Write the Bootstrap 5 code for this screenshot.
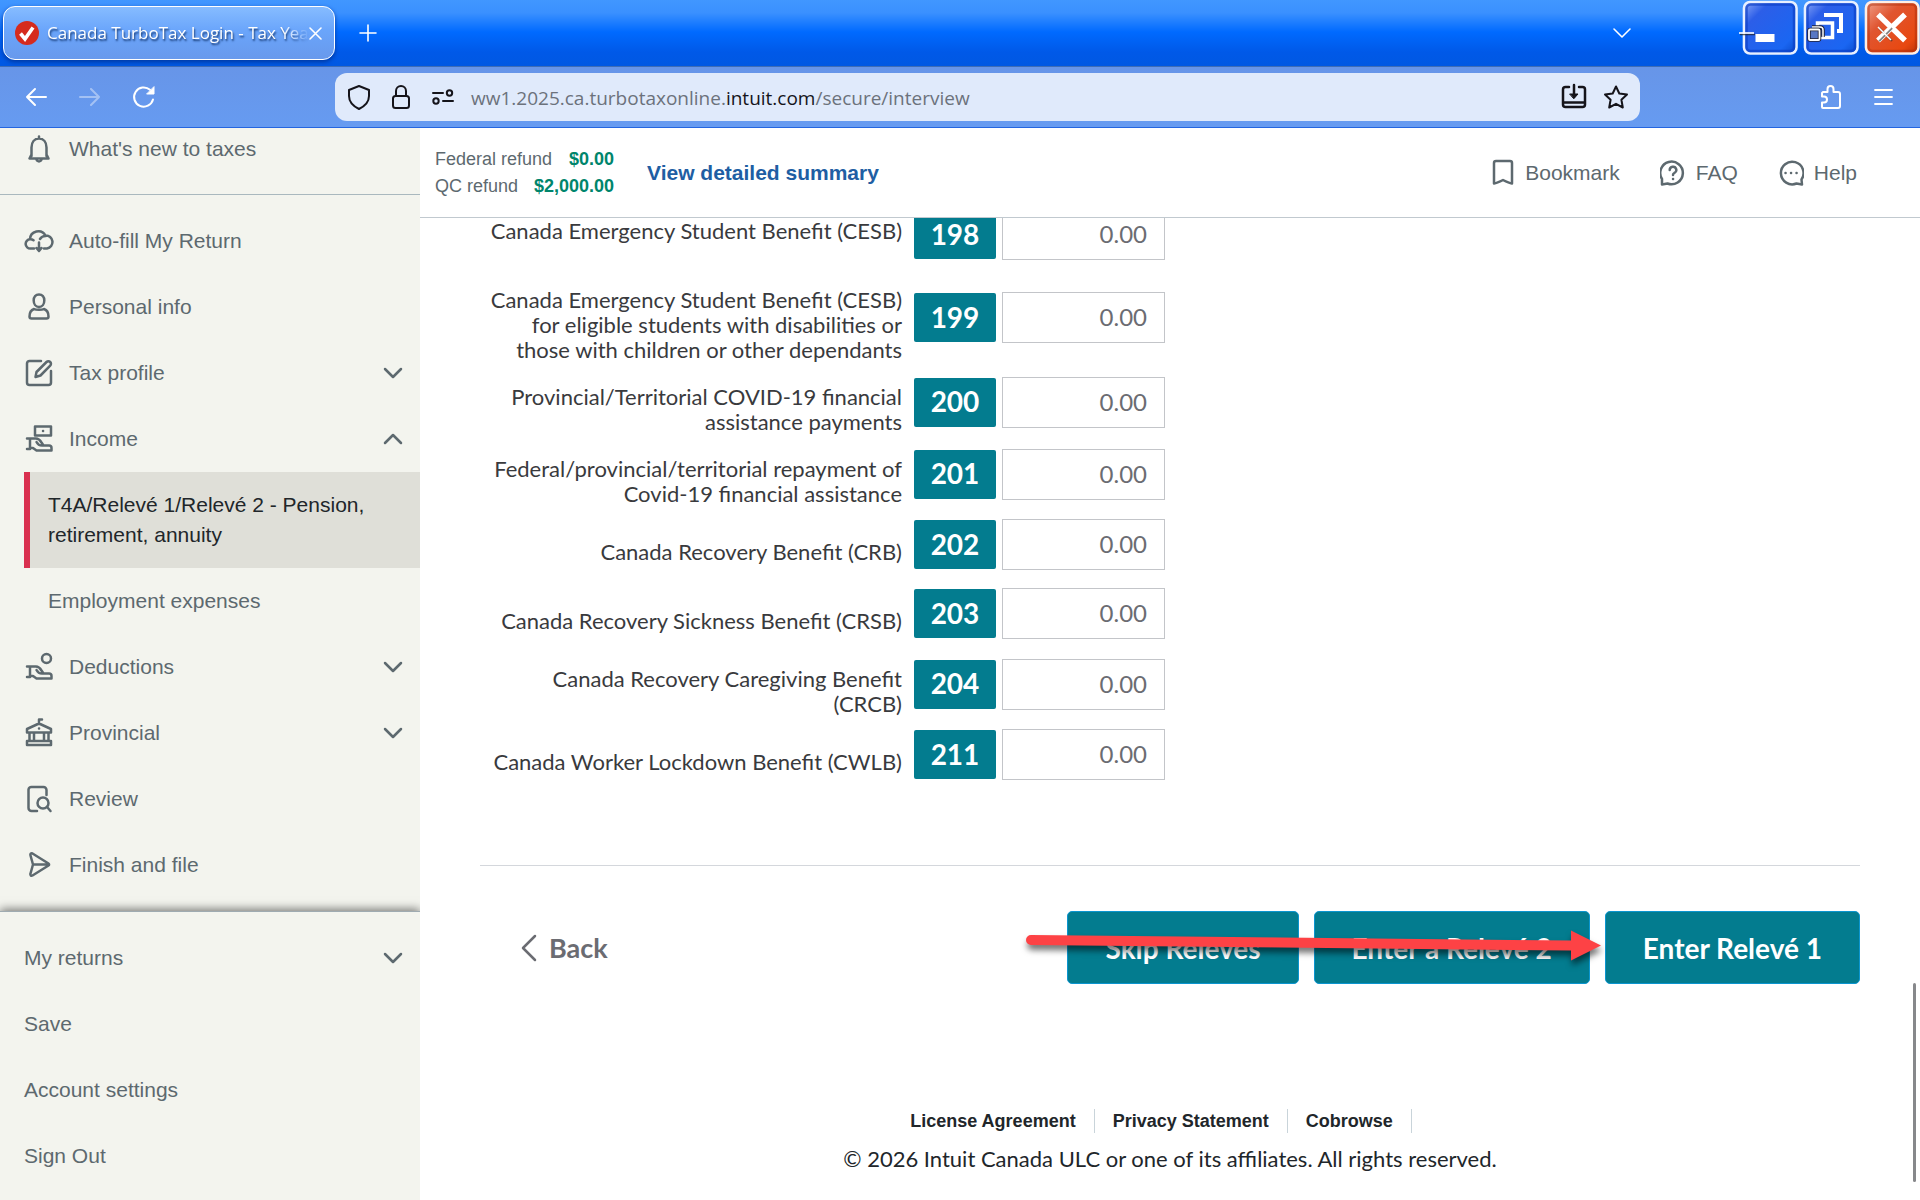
<!DOCTYPE html>
<html lang="en">
<head>
<meta charset="utf-8">
<meta name="viewport" content="width=device-width, initial-scale=1">
<title>Canada TurboTax Login - Tax Year 2025</title>
<link href="https://cdn.jsdelivr.net/npm/bootstrap@5.3.0/dist/css/bootstrap.min.css" rel="stylesheet">
<script src="https://cdn.jsdelivr.net/npm/bootstrap@5.3.0/dist/js/bootstrap.bundle.min.js"></script>
<style>
  :root { --teal: #037c8f; --slate: #5d696f; --sand: #f3f4ee; }
  body { font-family: "Liberation Sans", Arial, sans-serif; font-size: 21px; line-height: 30px; color: #393a3d; background: #fff; }
  button { font-family: inherit; }
  svg { display: block; flex: none; }
  .bare { background: none; border: 0; padding: 0; color: inherit; }
  .ico { fill: none; stroke: currentColor; stroke-width: 2.5; stroke-linecap: round; stroke-linejoin: round; }
  .ico-thin { stroke-width: 1.6; }

  /* browser frame */
  .titlebar { height: 67px; background: linear-gradient(#4197ff 0, #3a90ff 13px, #006aff 32px, #0059e8 52px, #0058e2 66px); border-bottom: 1px solid #3f6db5; color: #fff; font-family: "Open Sans", sans-serif; }
  .tab-pill { width: 332px; height: 54px; margin-left: 3px; margin-top: 6px; padding: 0 17px 0 11px; border: 1px solid #fff; border-radius: 12px; background: linear-gradient(#86bcff, #6aa5fb 45%, #6899ec); box-shadow: 0 2px 4px #0038a0; }
  .tab-title { font-size: 17px; text-shadow: 1px 2px 2px #12356e; white-space: nowrap; -webkit-mask-image: linear-gradient(90deg, #000 90%, transparent); mask-image: linear-gradient(90deg, #000 90%, transparent); }
  .tab-list { margin-right: 105px; }
  .toolbar-row { height: 61px; background: linear-gradient(#6795e8, #669bf1); border-bottom: 1px solid #2465e0; color: #fff; padding: 0 24px; font-family: "Open Sans", sans-serif; }
  .nav-set { width: 311px; gap: 26px; }
  .address { width: 1305px; height: 48px; border-radius: 12px; background: #e0eafb; color: #15141a; padding: 0 10px; gap: 14px; }
  .url-text { font-size: 19px; color: #6c727c; white-space: nowrap; padding-top: 2px; }
  .url-text b { font-weight: 400; color: #15141a; }
  .menu-set { gap: 27px; }

  /* sidebar */
  .sidebar { width: 420px; flex: none; background: var(--sand); color: var(--slate); }
  .side-row { height: 66px; padding: 0 17px 0 24px; gap: 15px; color: var(--slate); text-decoration: none; text-align: left; width: 100%; }
  .side-first { margin-top: -12px; }
  .side-rule { border-top: 1px solid #a9b8be; margin: 12px 0 13px; }
  .side-sub { display: flex; align-items: center; min-height: 66px; margin-left: 24px; padding-left: 24px; color: var(--slate); text-decoration: none; }
  .side-sub.current { min-height: 96px; padding: 18px 24px 18px 18px; border-left: 6px solid #d9304f; background: #dfdfd8; color: #21262a; }
  .side-foot { border-top: 1px solid #9fabb1; padding: 13px 0 11px; box-shadow: 0 -2px 9px rgba(0,0,0,.5); clip-path: inset(-16px 0 0 0); background: var(--sand); }

  /* summary bar */
  .summary { height: 90px; border-bottom: 1px solid #c1c9cf; padding: 1px 63px 0 15px; background: #fff; z-index: 1; position: relative; color: var(--slate); }
  .refunds { font-size: 18px; line-height: 27px; width: 179px; }
  .refunds b { color: #00856c; margin-left: 12px; }
  .summary-link { font-weight: 700; color: #205ea3; text-decoration: none; margin-left: 33px; }
  .tools { gap: 40px; }
  .tools a { color: var(--slate); text-decoration: none; gap: 10px; }

  /* slip form */
  .lato { font-family: Lato, sans-serif; }
  .slip { margin-top: -18px; padding-left: 60px; }
  .slip-row { min-height: 69px; padding: 3px 0; }
  .slip-label { width: 422px; padding: 15px 0 1px; font-size: 22px; line-height: 25px; text-align: right; white-space: nowrap; }
  .slip-label.raised { padding: 0 0 9px; }
  .box-code { width: 82px; height: 49px; margin: 0 6px 0 12px; padding-bottom: 2px; background: var(--teal); color: #fff; font-size: 28px; font-weight: 700; border-radius: 2px; }
  .box-amount { width: 163px; height: 51px; padding: 0 17px 2px; border: 1px solid #c3c5c9; border-radius: 0; font-size: 24px; text-align: right; color: #6b6c72; }
  .box-amount::placeholder { color: #6b6c72; opacity: 1; }
  .actions { margin: 76px 60px 0; padding-top: 45px; border-top: 1px solid #d4d7dc; }
  .action-set { gap: 15px; }
  .back-link { color: #6b6c72; font-size: 27px; font-weight: 700; margin-left: 41px; gap: 12px; }
  .btn-teal { --bs-btn-color: #fff; --bs-btn-bg: var(--teal); --bs-btn-border-color: #0b95cf; --bs-btn-hover-bg: #026b7c; --bs-btn-hover-color: #fff; --bs-btn-border-radius: 5px; --bs-btn-font-size: 28px; --bs-btn-font-weight: 700; height: 73px; padding: 0 37px; }
  .callout { position: absolute; right: 258px; top: 11px; filter: drop-shadow(1px 5px 3px rgba(0,0,0,.55)); pointer-events: none; }
  .legal { margin-top: 125px; font-size: 18px; line-height: 24px; font-weight: 700; }
  .legal a { color: #21262a; text-decoration: none; padding-right: 18px; margin-right: 18px; border-right: 1px solid #c9d4da; }
  .copyright { font-size: 22px; margin-top: 11px; color: #21262a; }
  .thumb { position: absolute; right: 4px; top: 855px; width: 3px; height: 199px; border-radius: 2px; background: #87888b; }
</style>
</head>
<body class="d-flex flex-column vh-100 overflow-hidden">

<svg width="0" height="0" class="position-absolute" aria-hidden="true">
  <symbol id="chev" viewBox="0 0 20 12"><path d="M2 2l8 8 8-8"/></symbol>
  <symbol id="bell" viewBox="0 0 30 30"><path d="M15 2.500v2M7.500 22V13.500C7.500 8 10.500 4.500 15 4.500S22.500 8 22.500 13.500V22M7.500 20.500L5.500 24.500H24.500L22.500 20.500M12.500 25.500a2.600 2.600 0 0 0 5 0"/></symbol>
  <symbol id="cloud" viewBox="0 0 30 30"><path d="M10 22.500H6.500A4.600 4.600 0 0 1 6 13.300 8.300 8.300 0 0 1 21.500 9.500 6.500 6.500 0 0 1 23 22.400H20M6 13.300a5 5 0 0 1 3.500 1M16 13a6.500 6.500 0 0 1 6-3M15 16.500v8M12.500 22l2.500 3 2.500-3"/></symbol>
  <symbol id="person" viewBox="0 0 30 30"><path d="M15 2.500c3.300 0 5.300 2.500 5.300 6s-2 6.500-5.300 6.500-5.300-3-5.300-6.500 2-6 5.300-6zM5.500 24.500c0-4 1.700-6.500 4.500-7.500 2 1 8 1 10 0 2.800 1 4.500 3.500 4.500 7.500 0 1.500-.5 2-2 2H7.500c-1.500 0-2-.5-2-2z"/></symbol>
  <symbol id="edit" viewBox="0 0 30 30"><path d="M17 3H5.500A2.500 2.500 0 0 0 3 5.500v19A2.500 2.500 0 0 0 5.500 27h19a2.500 2.500 0 0 0 2.500-2.500V13M11.500 19l1-5L22.500 4a2.600 2.600 0 0 1 3.700 3.700L16.500 17.500z"/></symbol>
  <symbol id="hand" viewBox="0 0 30 30"><path d="M3 14.500h3M3 25h3M6 14.500V25M6 14.500h6c2.500 0 4 1.500 5.500 4l2 3h5.500c1.500 0 2.500 1 2.500 2.500v2.500H12.500L9 24H6M12.500 18c1 2 3 3.500 5.500 3.500h2"/></symbol>
  <symbol id="hall" viewBox="0 0 30 30"><path d="M15 6V1.500h3M15 5.500L27 11v3.500H3V11zM5.500 14.500V23M10 14.500V23M20 14.500V23M24.500 14.500V23M3 23h24v4H3zM15 10.500h.1"/></symbol>
  <symbol id="review" viewBox="0 0 30 30"><path d="M13 27H7.500A3 3 0 0 1 4.500 24V5.500A3 3 0 0 1 7.500 3h12a3 3 0 0 1 3 3v5M23.500 23.500L26.500 27"/><circle cx="19" cy="19" r="5.500"/></symbol>
  <symbol id="send" viewBox="0 0 30 30"><path d="M6.500 5.500c-.5-1.500.5-2.500 2-2L24.500 13.500c.8.500.8 1.500 0 2L8.500 25.500c-1.500.8-2.500-.5-2-2L9 14.500zM9 14.500h15"/></symbol>
</svg>

<!-- Title bar -->
<header class="titlebar d-flex flex-shrink-0">
  <div class="tab-pill d-flex align-items-center">
    <svg width="24" height="24" viewBox="0 0 24 24" class="me-2"><circle cx="12" cy="12" r="12" fill="#d52b1e"/><path d="M5.500 12.500L10 18 18 6.500" fill="none" stroke="#fff" stroke-width="3.600"/></svg>
    <span class="tab-title">Canada TurboTax Login - Tax Yea</span>
    <button class="bare ms-auto" aria-label="Close tab"><svg width="13" height="13" viewBox="0 0 13 13" class="ico ico-thin"><path d="M1 1l11 11M12 1L1 12"/></svg></button>
  </div>
  <button class="bare ms-4" aria-label="New tab"><svg width="18" height="18" viewBox="0 0 18 18" class="ico ico-thin"><path d="M9 1v16M1 9h16"/></svg></button>
  <button class="bare ms-auto tab-list" aria-label="List all tabs"><svg width="20" height="12" class="ico ico-thin"><use href="#chev"/></svg></button>
  <div class="d-flex">
    <svg width="0" height="0"><defs>
      <linearGradient id="gb" x1="0" y1="0" x2="1" y2="1"><stop offset="0" stop-color="#8aa6f6"/><stop offset=".25" stop-color="#2c5ee8"/><stop offset=".8" stop-color="#1a66f2"/><stop offset="1" stop-color="#0a49c8"/></linearGradient>
      <linearGradient id="gr" x1="0" y1="0" x2="1" y2="1"><stop offset="0" stop-color="#f0a08a"/><stop offset=".35" stop-color="#e05530"/><stop offset=".8" stop-color="#e84810"/><stop offset="1" stop-color="#b83008"/></linearGradient>
    </defs></svg>
    <button class="bare align-self-start" aria-label="Minimize"><svg width="61" height="56" viewBox="0 0 61 56"><rect x="7" y="2" width="52.500" height="51.500" rx="6" fill="url(#gb)" stroke="#e8f0ff" stroke-width="2.600"/><rect x="9.500" y="4.500" width="47.500" height="46.500" rx="4" fill="none" stroke="#0c3fc4" stroke-width="2.500" opacity=".65"/><path d="M18.500 34h19v8h-19z" fill="#fff"/><path d="M3 34.500h15" stroke="#222" stroke-width="1.500" opacity=".7"/><path d="M2 33h15" stroke="#fff" stroke-width="1.600"/></svg></button>
    <button class="bare align-self-start" aria-label="Restore"><svg width="61" height="56" viewBox="0 0 61 56"><rect x="7" y="2" width="52.500" height="51.500" rx="6" fill="url(#gb)" stroke="#e8f0ff" stroke-width="2.600"/><rect x="9.500" y="4.500" width="47.500" height="46.500" rx="4" fill="none" stroke="#0c3fc4" stroke-width="2.500" opacity=".65"/><path d="M26 15h17v16h-4" fill="none" stroke="#fff" stroke-width="4"/><path d="M19.500 23h15v14.500h-15z" fill="none" stroke="#fff" stroke-width="3.500"/><path d="M14 27h8c2 0 3 1 3 3v7" fill="none" stroke="#223" stroke-width="3.500"/><path d="M14 27h8c2 0 3 1 3 3v7" fill="none" stroke="#fff" stroke-width="1.500"/><rect x="11" y="29.500" width="10.500" height="10.500" rx="1" fill="#5877c4" stroke="#223" stroke-width="3.500"/><rect x="11" y="29.500" width="10.500" height="10.500" rx="1" fill="none" stroke="#fff" stroke-width="1.800"/></svg></button>
    <button class="bare align-self-start" aria-label="Close"><svg width="61" height="56" viewBox="0 0 61 56"><rect x="7" y="2" width="52.500" height="51.500" rx="6" fill="url(#gr)" stroke="#ffeee6" stroke-width="2.600"/><rect x="9.500" y="4.500" width="47.500" height="46.500" rx="4" fill="none" stroke="#a82c0c" stroke-width="2.500" opacity=".45"/><path d="M19 14.500l27 26M46 14.500l-27 26" stroke="#fff" stroke-width="5.500"/><path d="M20 28l13 13M33 28L20 41" stroke="#333" stroke-width="2.400" opacity=".6"/><path d="M19 27l13 13M32 27L19 40" stroke="#fff" stroke-width="1.500"/></svg></button>
  </div>
</header>

<!-- Navigation toolbar -->
<div class="toolbar-row d-flex align-items-center flex-shrink-0">
  <div class="nav-set d-flex align-items-center">
    <button class="bare" aria-label="Back"><svg width="24" height="20" viewBox="0 0 24 20" class="ico"><path d="M22 10H3M11 2l-8 8 8 8" stroke-width="2"/></svg></button>
    <button class="bare ms-1" aria-label="Forward" disabled><svg width="24" height="20" viewBox="0 0 24 20" class="ico" opacity=".4"><path d="M2 10h19M13 2l8 8-8 8" stroke-width="2"/></svg></button>
    <button class="bare ms-1" aria-label="Reload"><svg width="24" height="24" viewBox="0 0 24 24" class="ico"><path d="M21 14.500A9.600 9.600 0 1 1 18 4.800" stroke-width="2"/><path d="M22 2v7h-7z" fill="#fff" stroke-width="1"/></svg></button>
  </div>
  <div class="address d-flex align-items-center">
    <svg width="28" height="28" viewBox="0 0 28 28" class="ico"><path d="M14 3L24 7v6c0 6-4 10-10 13C8 23 4 19 4 13V7z" stroke-width="2"/></svg>
    <svg width="28" height="28" viewBox="0 0 28 28" class="ico"><rect x="6" y="13" width="16" height="12" rx="2.500" stroke-width="2"/><path d="M9 13V8a5 5 0 0 1 10 0v5" stroke-width="2"/></svg>
    <svg width="28" height="28" viewBox="0 0 28 28" class="ico"><path d="M4 10h10M14 18h10" stroke-width="2"/><circle cx="20.500" cy="10" r="2.700" stroke-width="2"/><circle cx="7" cy="18" r="2.700" stroke-width="2"/></svg>
    <span class="url-text flex-grow-1">ww1.2025.ca.turbotaxonline.<b>intuit.com</b>/secure/interview</span>
    <button class="bare" aria-label="Install"><svg width="28" height="28" viewBox="0 0 28 28" class="ico"><path d="M9 4H5.500A2.500 2.500 0 0 0 3 6.500v15A2.500 2.500 0 0 0 5.500 24h17a2.500 2.500 0 0 0 2.500-2.500v-15A2.500 2.500 0 0 0 22.500 4H19M3 19.500h22M14 2v12"/><path d="M10 11h8l-4 4.500z" fill="currentColor" stroke-width="1"/></svg></button>
    <button class="bare" aria-label="Bookmark page"><svg width="28" height="28" viewBox="0 0 28 28" class="ico"><path d="M14 3.500l3.300 7 7.700 1-5.600 5.300 1.400 7.700L14 20.800 7.200 24.500l1.400-7.700L3 11.500l7.700-1z" stroke-width="2"/></svg></button>
  </div>
  <div class="menu-set d-flex align-items-center ms-auto">
    <button class="bare" aria-label="Extensions"><svg width="28" height="28" viewBox="0 0 28 28" class="ico"><path d="M6 9h4.500V6a3 3 0 0 1 6 0v3H21a2 2 0 0 1 2 2v12a2 2 0 0 1-2 2H6a1 1 0 0 1-1-1v-4.500h2a2.500 2.500 0 0 0 0-6H5V10z" stroke-width="2"/></svg></button>
    <button class="bare" aria-label="Menu"><svg width="24" height="20" viewBox="0 0 24 20" class="ico"><path d="M3 3h17M3 10h17M3 17h17" stroke-width="1.800"/></svg></button>
  </div>
</div>

<div class="d-flex flex-grow-1 overflow-hidden">
  <!-- Sidebar -->
  <nav class="sidebar d-flex flex-column" aria-label="Return sections">
    <div class="flex-grow-1">
      <a href="#" class="side-row side-first d-flex align-items-center"><svg width="30" height="30" class="ico"><use href="#bell"/></svg>What's new to taxes</a>
      <div class="side-rule"></div>
      <a href="#" class="side-row d-flex align-items-center"><svg width="30" height="30" class="ico"><use href="#cloud"/></svg>Auto-fill My Return</a>
      <a href="#" class="side-row d-flex align-items-center"><svg width="30" height="30" class="ico"><use href="#person"/></svg>Personal info</a>
      <button class="bare side-row d-flex align-items-center"><svg width="30" height="30" class="ico"><use href="#edit"/></svg>Tax profile<svg width="20" height="12" class="ico ms-auto"><use href="#chev"/></svg></button>
      <button class="bare side-row d-flex align-items-center" aria-expanded="true"><svg width="30" height="30" viewBox="0 0 30 30" class="ico"><use href="#hand"/><path d="M11 2.500h16v9H11zM19 7h.1"/></svg>Income<svg width="20" height="12" viewBox="0 0 20 12" class="ico ms-auto"><path d="M2 10l8-8 8 8"/></svg></button>
      <a href="#" class="side-sub current" aria-current="page">T4A/Relevé 1/Relevé 2 - Pension, retirement, annuity</a>
      <a href="#" class="side-sub">Employment expenses</a>
      <button class="bare side-row d-flex align-items-center"><svg width="30" height="30" viewBox="0 0 30 30" class="ico"><use href="#hand"/><circle cx="22.500" cy="6.500" r="4.500"/></svg>Deductions<svg width="20" height="12" class="ico ms-auto"><use href="#chev"/></svg></button>
      <button class="bare side-row d-flex align-items-center"><svg width="30" height="30" class="ico"><use href="#hall"/></svg>Provincial<svg width="20" height="12" class="ico ms-auto"><use href="#chev"/></svg></button>
      <a href="#" class="side-row d-flex align-items-center"><svg width="30" height="30" class="ico"><use href="#review"/></svg>Review</a>
      <a href="#" class="side-row d-flex align-items-center"><svg width="30" height="30" class="ico"><use href="#send"/></svg>Finish and file</a>
    </div>
    <div class="side-foot">
      <button class="bare side-row d-flex align-items-center">My returns<svg width="20" height="12" class="ico ms-auto"><use href="#chev"/></svg></button>
      <a href="#" class="side-row d-flex align-items-center">Save</a>
      <a href="#" class="side-row d-flex align-items-center">Account settings</a>
      <a href="#" class="side-row d-flex align-items-center">Sign Out</a>
    </div>
  </nav>

  <main class="flex-grow-1 position-relative overflow-hidden">
    <div class="summary d-flex align-items-center">
      <div class="refunds">
        <div class="d-flex justify-content-between">Federal refund <b>$0.00</b></div>
        <div class="d-flex justify-content-between">QC refund <b>$2,000.00</b></div>
      </div>
      <a href="#" class="summary-link">View detailed summary</a>
      <div class="tools d-flex ms-auto">
        <a href="#" class="d-flex align-items-center"><svg width="24" height="28" viewBox="0 0 24 28" class="ico"><path d="M3 4a2 2 0 0 1 2-2h14a2 2 0 0 1 2 2v20.500c-3-.5-6-2-9-3.500-3 1.500-6 3-9 3.500z"/></svg>Bookmark</a>
        <a href="#" class="d-flex align-items-center"><svg width="26" height="28" viewBox="0 0 26 28" class="ico"><path d="M2 25.500V20A11.300 11.300 0 1 1 7.500 24.500zM9.700 11a3.300 3.300 0 1 1 4.600 3c-1 .5-1.300 1-1.300 2M13 20h.1"/></svg>FAQ</a>
        <a href="#" class="d-flex align-items-center"><svg width="26" height="28" viewBox="0 0 26 28" class="ico"><path d="M24 25.500l-.500-5A11.300 11.300 0 1 0 18.500 24.500zM7.500 14h.1M13 14h.1M18.500 14h.1"/></svg>Help</a>
      </div>
    </div>

    <form class="lato">
      <div class="slip">
        <div class="slip-row d-flex align-items-center"><label class="slip-label raised" for="b198">Canada Emergency Student Benefit (CESB)</label><span class="box-code d-flex align-items-center justify-content-center">198</span><input id="b198" class="box-amount" placeholder="0.00"></div>
        <div class="slip-row d-flex align-items-center"><label class="slip-label" for="b199">Canada Emergency Student Benefit (CESB)<br>for eligible students with disabilities or<br>those with children or other dependants</label><span class="box-code d-flex align-items-center justify-content-center">199</span><input id="b199" class="box-amount" placeholder="0.00"></div>
        <div class="slip-row d-flex align-items-center"><label class="slip-label" for="b200">Provincial/Territorial COVID-19 financial<br>assistance payments</label><span class="box-code d-flex align-items-center justify-content-center">200</span><input id="b200" class="box-amount" placeholder="0.00"></div>
        <div class="slip-row d-flex align-items-center"><label class="slip-label" for="b201">Federal/provincial/territorial repayment of<br>Covid-19 financial assistance</label><span class="box-code d-flex align-items-center justify-content-center">201</span><input id="b201" class="box-amount" placeholder="0.00"></div>
        <div class="slip-row d-flex align-items-center"><label class="slip-label" for="b202">Canada Recovery Benefit (CRB)</label><span class="box-code d-flex align-items-center justify-content-center">202</span><input id="b202" class="box-amount" placeholder="0.00"></div>
        <div class="slip-row d-flex align-items-center"><label class="slip-label" for="b203">Canada Recovery Sickness Benefit (CRSB)</label><span class="box-code d-flex align-items-center justify-content-center">203</span><input id="b203" class="box-amount" placeholder="0.00"></div>
        <div class="slip-row d-flex align-items-center"><label class="slip-label" for="b204">Canada Recovery Caregiving Benefit<br>(CRCB)</label><span class="box-code d-flex align-items-center justify-content-center">204</span><input id="b204" class="box-amount" placeholder="0.00"></div>
        <div class="slip-row d-flex align-items-center"><label class="slip-label" for="b211">Canada Worker Lockdown Benefit (CWLB)</label><span class="box-code d-flex align-items-center justify-content-center">211</span><input id="b211" class="box-amount" placeholder="0.00"></div>
      </div>
      <div class="actions">
        <div class="action-set d-flex align-items-center position-relative">
          <button type="button" class="bare back-link d-flex align-items-center me-auto"><svg width="16" height="28" viewBox="0 0 16 28" class="ico"><path d="M14 2L2 14l12 12"/></svg>Back</button>
          <button type="button" class="btn btn-teal">Skip Relevés</button>
          <button type="button" class="btn btn-teal">Enter a Relevé 2</button>
          <button type="submit" class="btn btn-teal">Enter Relevé 1</button>
          <svg class="callout" width="576" height="48" viewBox="0 0 576 48"><path d="M5 13a5 5 0 0 0 0 10L545 28.500V38.500L575 23.500 545 8.500V18.500z" fill="#fd4245"/></svg>
        </div>
      </div>
    </form>

    <footer>
      <div class="legal d-flex justify-content-center"><a href="#">License Agreement</a><a href="#">Privacy Statement</a><a href="#">Cobrowse</a></div>
      <p class="copyright lato text-center mb-0">© 2026 Intuit Canada ULC or one of its affiliates. All rights reserved.</p>
    </footer>
    <div class="thumb"></div>
  </main>
</div>
</body>
</html>
